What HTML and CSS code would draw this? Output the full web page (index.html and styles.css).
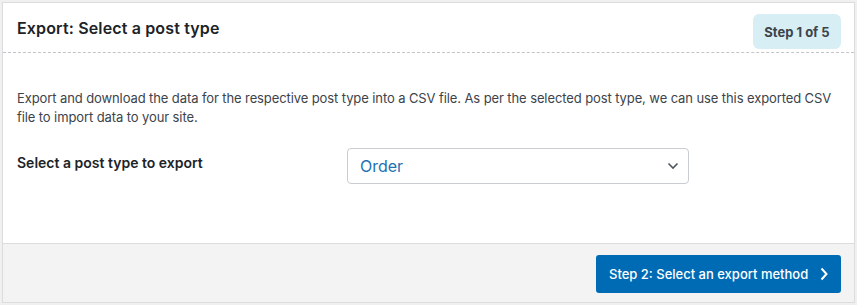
FILE: index.html
```html
<!DOCTYPE html>
<html>
<head>
<meta charset="utf-8">
<link rel="stylesheet" href="styles.css">
</head>
<body>
<div class="card">
  <div class="card-header">
    <h2 class="title">Export: Select a post type</h2>
    <span class="step-badge">Step 1 of 5</span>
  </div>
  <div class="card-body">
    <p class="desc">Export and download the data for the respective post type into a CSV file. As per the selected post type, we can use this exported CSV file to import data to your site.</p>
    <div class="field-row">
      <label class="field-label">Select a post type to export</label>
      <div class="select">
        <span class="select-value">Order</span>
        <svg class="select-arrow" width="12" height="8" viewBox="0 0 12 8"><path d="M1.5 1.5 L6 6 L10.5 1.5" fill="none" stroke="#50575e" stroke-width="1.6"/></svg>
      </div>
    </div>
  </div>
  <div class="card-footer">
    <button class="btn-primary"><span class="btn-label">Step 2: Select an export method</span><svg class="btn-icon" width="10" height="14" viewBox="0 0 10 14"><path d="M2.5 1.5 L7.5 7 L2.5 12.5" fill="none" stroke="#fff" stroke-width="2"/></svg></button>
  </div>
</div>
</body>
</html>
```
FILE: styles.css
```css
* { box-sizing: border-box; }
html, body { margin: 0; padding: 0; }
body {
  background: #f0f0f1;
  padding: 2px 2px 2px 2px;
  font-family: Inter, "Liberation Sans", sans-serif;
  color: #3c434a;
}
.card {
  width: 853px;
  height: 301px;
  background: #fff;
  border: 1px solid #dcdcde;
  display: flex;
  flex-direction: column;
}
.card-header {
  height: 50px;
  display: flex;
  align-items: center;
  justify-content: space-between;
  padding: 0 13px 0 14px;
  border-bottom: 1px dashed #c3c4c7;
}
.title {
  margin: 0;
  font-size: 16px;
  letter-spacing: 0.15px;
  font-weight: 600;
  color: #1d2327;
}
.step-badge {
  background: #d8eef5;
  border-radius: 6px;
  height: 35px;
  width: 88px;
  display: flex;
  align-items: center;
  justify-content: center;
  font-size: 13px;
  font-weight: 700;
  color: #3c434a;
  margin-top: 8px;
}
.card-body {
  flex: 1;
  padding: 36px 10px 0 14px;
}
.desc {
  margin: 0;
  font-size: 13px;
  letter-spacing: -0.1px;
  line-height: 19px;
  color: #3c434a;
}
.field-row {
  display: flex;
  align-items: flex-start;
  margin-top: 21px;
}
.field-label {
  width: 330px;
  font-size: 14px;
  font-weight: 600;
  color: #1d2327;
  padding-top: 6px;
}
.select {
  width: 342px;
  height: 36px;
  border: 1px solid #c9ccd1;
  border-radius: 4px;
  display: flex;
  align-items: center;
  justify-content: space-between;
  padding: 0 9px 0 12px;
}
.select-value {
  font-size: 16px;
  color: #2271b1;
}
.card-footer {
  height: 59px;
  background: #f3f3f3;
  border-top: 1px solid #dcdcde;
  display: flex;
  align-items: center;
  justify-content: flex-end;
  padding: 0 13px 0 0;
}
.btn-primary {
  height: 38px;
  width: 245px;
  background: #006bb5;
  border: none;
  border-radius: 3px;
  color: #fff;
  font-family: inherit;
  font-size: 13px;
  font-weight: 500;
  white-space: nowrap;
  display: flex;
  align-items: center;
  justify-content: flex-start;
  gap: 11px;
  padding: 0 12px 0 13px;
  margin-top: 2px;
}
.btn-icon { flex: none; }
```
